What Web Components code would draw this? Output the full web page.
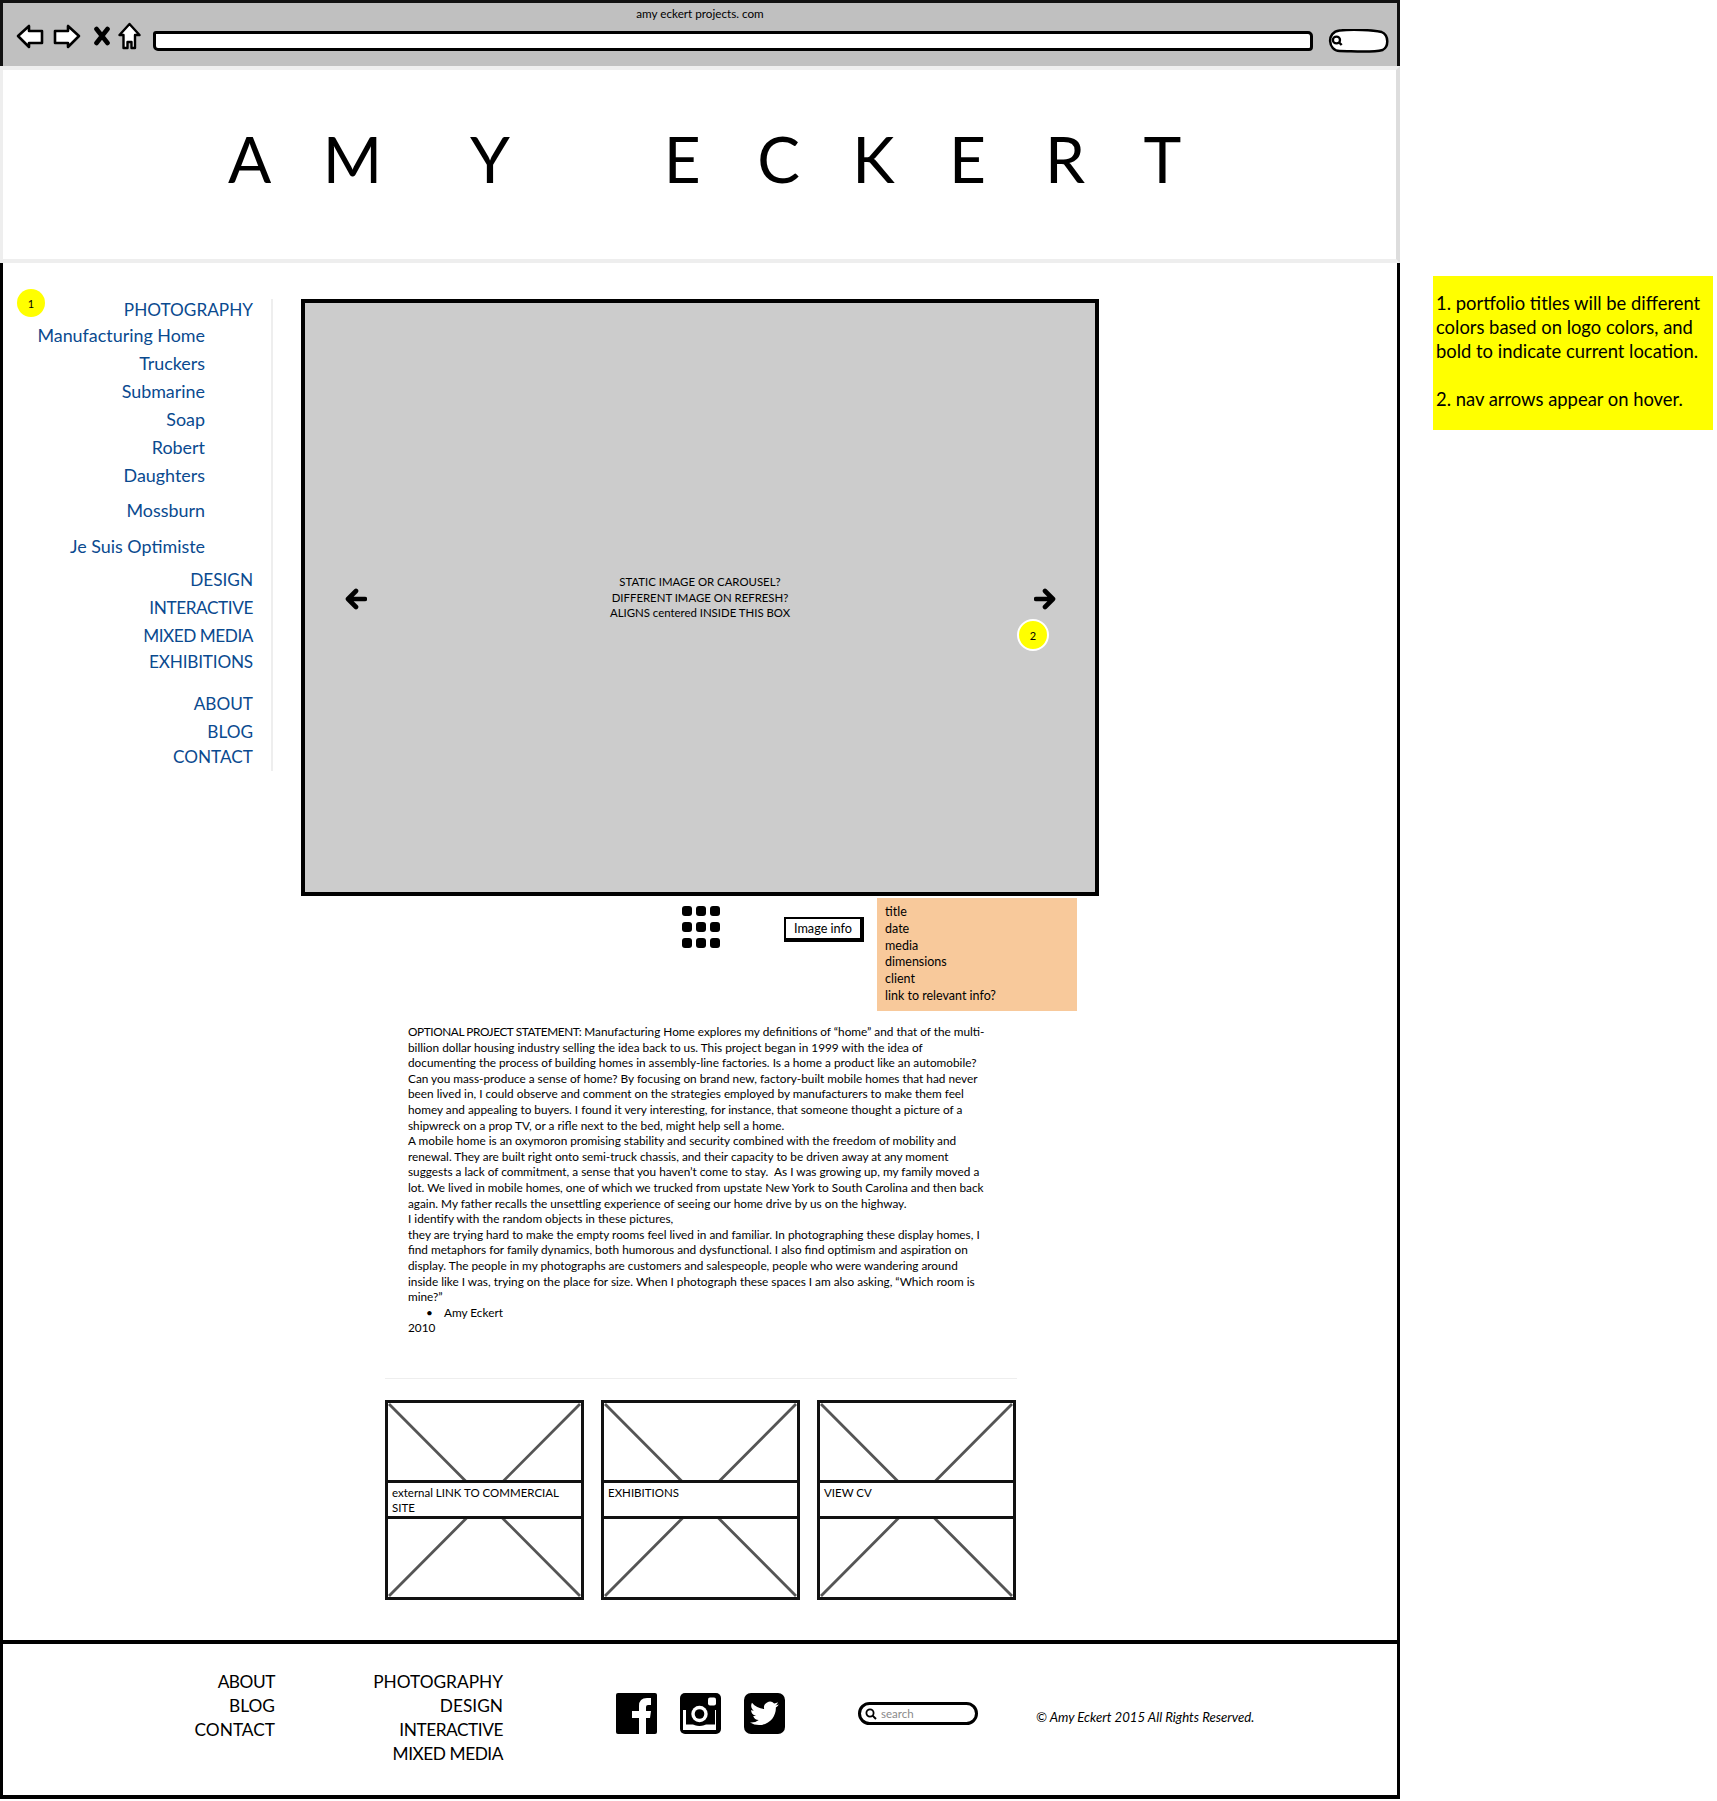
<!DOCTYPE html>
<html lang="en">
<head>
<meta charset="utf-8">
<title>Amy Eckert wireframe</title>
<style>
html,body{margin:0;padding:0;background:#fff}
body{font-family:Lato,"Liberation Sans",sans-serif;color:#000;width:1717px;height:1801px;overflow:hidden}
</style>
</head>
<body>
<x-page>
  <x-frame>
    <x-browser-bar slot="bar"></x-browser-bar>
    <x-banner slot="banner"><span style="margin-right:-11px">A</span> <span style="margin-right:28px">M</span> <span style="margin-right:52px">Y</span>&nbsp; <span style="margin-right:-6px">E</span> <span style="margin-right:-10px">C</span> <span style="margin-right:-8px">K</span> <span style="margin-right:-3.5px">E</span> <span style="margin-right:-2px">R</span> T</x-banner>
    <x-side-nav slot="nav"></x-side-nav>
    <x-stage slot="main"></x-stage>
    <x-info-row slot="main"></x-info-row>
    <x-statement slot="main"></x-statement>
    <x-tiles slot="main">
      <x-tile>external LINK TO COMMERCIAL SITE</x-tile>
      <x-tile>EXHIBITIONS</x-tile>
      <x-tile>VIEW CV</x-tile>
    </x-tiles>
    <x-site-footer slot="footer"></x-site-footer>
  </x-frame>
  <x-note>1. portfolio titles will be different<br>colors based on logo colors, and<br>bold to indicate current location.<br><br>2. nav arrows appear on hover.</x-note>
</x-page>
<script>
const def=(name,html)=>customElements.define(name,class extends HTMLElement{
  constructor(){super();this.attachShadow({mode:'open'}).innerHTML=typeof html==='function'?html():html;}
});

def('x-page',`<style>:host{display:flex;align-items:flex-start;width:1717px}</style><slot></slot>`);

def('x-frame',`<style>
:host{display:flex;flex-direction:column;width:1400px;height:1799px;box-sizing:border-box;flex:none}
.body{flex:1;display:flex;border-left:3px solid #000;border-right:3px solid #000;padding-top:32px;min-height:0}
.main{flex:1;display:flex;flex-direction:column;margin:4px 0 0 28px;min-width:0}
</style>
<slot name="bar"></slot><slot name="banner"></slot>
<div class="body"><slot name="nav"></slot><div class="main"><slot name="main"></slot></div></div>
<slot name="footer"></slot>`);

def('x-browser-bar',`<style>
:host{display:block;height:66px;box-sizing:border-box;background:#c0c0c0;border:3px solid #111;border-bottom:0;position:relative;font-size:11px}
.t{position:absolute;left:0;right:0;top:3px;text-align:center;line-height:14px;font-size:11.7px}
.row{display:flex;align-items:center;height:100%;padding:12px 0 0 13px;box-sizing:border-box}
svg{display:block;flex:none}
.nav{margin-bottom:10px}
.addr{flex:none;width:1160px;height:20px;box-sizing:border-box;background:#fff;border:3px solid #000;border-radius:3px 5px 4px 5px;margin-left:12px}
.srch{margin-left:14px}
</style>
<div class="t">amy eckert projects. com</div>
<div class="row">
<svg class="nav" width="28" height="26" viewBox="0 0 28 26"><path d="M2 13 L13 3 V8 H26 V20 H13 V24 Z" fill="#fff" stroke="#000" stroke-width="2.6" stroke-linejoin="round"/></svg>
<svg class="nav" width="28" height="26" viewBox="0 0 28 26" style="margin-left:9px"><path d="M26 13 L15 3 V8 H2 V20 H15 V24 Z" fill="#fff" stroke="#000" stroke-width="2.6" stroke-linejoin="round"/></svg>
<svg class="nav" width="18" height="20" viewBox="0 0 18 20" style="margin-left:12px"><path d="M3.5 3 L14.5 17 M14.5 3 L3.5 17" fill="none" stroke="#000" stroke-width="4.6" stroke-linecap="round"/></svg>
<svg class="nav" width="23" height="28" viewBox="0 0 23 28" style="margin-left:7px"><path d="M11.5 2 L21.5 13 H17 V26 H13.5 V20 H9.5 V26 H5.5 V13 H1.5 Z" fill="#fff" stroke="#000" stroke-width="2.4" stroke-linejoin="round"/></svg>
<div class="addr"></div>
<svg class="srch" width="63" height="24" viewBox="0 0 60 24" preserveAspectRatio="none"><path d="M12 1.5 C24 0 44 1 52 3 C59 6 59 18 53 21 C42 24 24 22 12 22 C1 22 -1 3 12 1.5 Z" fill="#fff" stroke="#000" stroke-width="2.4"/><circle cx="9" cy="11" r="3.4" fill="none" stroke="#000" stroke-width="2.2"/><path d="M11.5 13.5 L14 16" stroke="#000" stroke-width="2.4"/></svg>
</div>`);

def('x-banner',`<style>
:host{display:block;height:197px;box-sizing:border-box;background:#fff;border:4px solid #eee;border-left-width:3px;border-right-color:#ddd;position:relative}
.name{padding:50px 0 0 225px;font-size:64px;line-height:78px;letter-spacing:23px;word-spacing:0;white-space:nowrap;font-weight:400;margin:0}
</style><h1 class="name"><slot></slot></h1>`);

def('x-side-nav',()=>{
 const items=[['PHOTOGRAPHY',0,-3],['Manufacturing Home',1,-3],['Truckers',1,0],['Submarine',1,0],['Soap',1,0],['Robert',1,0],['Daughters',1,0],['Mossburn',1,7],['Je Suis Optimiste',1,8],['DESIGN',0,6],['INTERACTIVE',0,0,-.4],['MIXED MEDIA',0,0,-.45],['EXHIBITIONS',0,-2,-.2],['ABOUT',0,14],['BLOG',0,0],['CONTACT',0,-3]];
 return `<style>
:host{display:block;width:270px;height:476px;box-sizing:border-box;position:relative;flex:none}
ul{list-style:none;margin:4px 0 0;padding:0 18px 0 0;height:472px;box-sizing:border-box;display:flex;flex-direction:column;align-items:flex-end;border-right:2px solid #eee;color:#0a4a8f;font-size:17.2px;line-height:28px}
li.s{margin-right:48px;font-size:17.9px}
x-badge{position:absolute;left:14px;top:-6px}
</style><x-badge size="28">1</x-badge><ul>${items.map(([t,s,d,l])=>`<li class="${s?'s':''}" style="margin-top:${d}px${l?`;letter-spacing:${l}px`:''}">${t}</li>`).join('')}</ul>`;
});

customElements.define('x-badge',class extends HTMLElement{
 constructor(){super();const s=this.getAttribute('size')||28;const b=this.hasAttribute('ring')?'2px solid #fff':'0';
 this.attachShadow({mode:'open'}).innerHTML=`<style>:host{display:flex;width:${s}px;height:${s}px;box-sizing:border-box;border-radius:50%;background:#ff0;border:${b};align-items:center;justify-content:center;font-size:11px;line-height:1;color:#000}</style><slot></slot>`;}
});

def('x-stage',`<style>
:host{display:flex;width:798px;height:597px;box-sizing:border-box;flex:none;border:4px solid #000;background:#ccc;align-items:center;justify-content:center;position:relative;text-align:center;font-size:11.4px;line-height:15.5px}
svg{position:absolute;top:285px}
x-badge{position:absolute;left:712px;top:316px}
p{margin:0}
</style>
<svg style="left:40px" width="22" height="22" viewBox="0 0 22 22"><path d="M20 11 H4 M11 3 L3 11 L11 19" fill="none" stroke="#000" stroke-width="4.6" stroke-linecap="round" stroke-linejoin="round"/></svg>
<svg style="left:729px" width="22" height="22" viewBox="0 0 22 22"><path d="M2 11 H18 M11 3 L19 11 L11 19" fill="none" stroke="#000" stroke-width="4.6" stroke-linecap="round" stroke-linejoin="round"/></svg>
<p>STATIC IMAGE OR CAROUSEL?<br>DIFFERENT IMAGE ON REFRESH?<br>ALIGNS centered INSIDE THIS BOX</p>
<x-badge size="32" ring>2</x-badge>`);

def('x-info-row',`<style>
:host{display:flex;align-items:flex-start;padding-left:381px;flex:none}
.dots{display:grid;grid-template-columns:repeat(3,10px);grid-auto-rows:10px;gap:6px 4px;margin-top:10px}
.dots i{background:#000;border-radius:3px}
.btn{width:80px;height:25px;box-sizing:border-box;margin:21px 13px 0 64px;border:2px solid #000;border-right-width:4px;border-bottom-width:4px;font-size:12.7px;line-height:19px;text-align:center;white-space:nowrap}
.card{width:200px;height:113px;box-sizing:border-box;margin-top:2px;padding:6px 8px;background:#f8c99b;font-size:12.5px;line-height:16.8px}
</style>
<div class="dots">${'<i></i>'.repeat(9)}</div>
<div class="btn">Image info</div>
<div class="card">title<br>date<br>media<br>dimensions<br>client<br>link to relevant info?</div>`);

def('x-statement',`<style>
:host{display:block;flex:none;margin:13px 0 0 107px;font-size:11.8px;line-height:15.6px;white-space:nowrap}
.b{padding-left:18px}.b::before{content:"•";display:inline-block;width:18px}
.c{letter-spacing:-.4px}
</style>
<span class="c">OPTIONAL PROJECT STATEMENT:</span> Manufacturing Home explores my definitions of “home” and that of the multi-<br>
billion dollar housing industry selling the idea back to us. This project began in 1999 with the idea of<br>
documenting the process of building homes in assembly-line factories. Is a home a product like an automobile?<br>
Can you mass-produce a sense of home? By focusing on brand new, factory-built mobile homes that had never<br>
been lived in, I could observe and comment on the strategies employed by manufacturers to make them feel<br>
homey and appealing to buyers. I found it very interesting, for instance, that someone thought a picture of a<br>
shipwreck on a prop TV, or a rifle next to the bed, might help sell a home.<br>
A mobile home is an oxymoron promising stability and security combined with the freedom of mobility and<br>
renewal. They are built right onto semi-truck chassis, and their capacity to be driven away at any moment<br>
suggests a lack of commitment, a sense that you haven’t come to stay.&nbsp; As I was growing up, my family moved a<br>
lot. We lived in mobile homes, one of which we trucked from upstate New York to South Carolina and then back<br>
again. My father recalls the unsettling experience of seeing our home drive by us on the highway.<br>
I identify with the random objects in these pictures,<br>
they are trying hard to make the empty rooms feel lived in and familiar. In photographing these display homes, I<br>
find metaphors for family dynamics, both humorous and dysfunctional. I also find optimism and aspiration on<br>
display. The people in my photographs are customers and salespeople, people who were wandering around<br>
inside like I was, trying on the place for size. When I photograph these spaces I am also asking, “Which room is<br>
mine?”
<div class="b">Amy Eckert</div>
2010`);

def('x-tiles',`<style>
:host{display:flex;flex:none;width:632px;margin:42px 0 0 84px;padding-top:21px;gap:17px;border-top:1px solid #eee;box-sizing:border-box}
</style><slot></slot>`);

def('x-tile',`<style>
:host{display:block;width:199px;height:200px;box-sizing:border-box;border:3px solid #111;position:relative;background:#fff;flex:none}
svg{display:block;width:100%;height:100%}
.l{position:absolute;left:-3px;right:-3px;top:77px;height:39px;box-sizing:border-box;background:#fff;border:3px solid #111;padding:2px 4px;font-size:11.5px;line-height:15.5px}
</style>
<svg viewBox="0 0 193 194" preserveAspectRatio="none"><path d="M1 1 L192 193 M192 1 L1 193" stroke="#555" stroke-width="2.8" fill="none"/></svg>
<div class="l"><slot></slot></div>`);

def('x-site-footer',`<style>
:host{display:flex;align-items:flex-start;height:159px;box-sizing:border-box;border:4px solid #000;border-left-width:3px;border-right-width:3px;padding-top:26px;flex:none;font-size:17.3px;line-height:24px}
.c{text-align:right;white-space:nowrap;flex:none}
.c span{letter-spacing:-.45px}
.icons{display:flex;gap:23px;margin:23px 0 0 113px}
svg{display:block;flex:none}
.s{width:120px;height:23px;box-sizing:border-box;margin:32px 0 0 73px;border:3px solid #000;border-radius:12px;display:flex;align-items:center;gap:4px;padding-left:4px;font-size:11.5px;line-height:14px;color:#8a8a8a}
.cp{margin:37px 0 0 58px;font-size:13.2px;line-height:20px;font-style:italic;white-space:nowrap}
</style>
<div class="c" style="width:272px"><span>ABOUT</span><br>BLOG<br>CONTACT</div>
<div class="c" style="width:228px">PHOTOGRAPHY<br>DESIGN<br><span>INTERACTIVE</span><br><span>MIXED MEDIA</span></div>
<div class="icons">
<svg width="41" height="41" viewBox="0 0 41 41"><rect width="41" height="41" rx="2"/><path d="M23 41 V25 H16 V18 H23 V13 Q23 5 31 5 H35 V12 H32 Q30 12 30 14 V18 H35 L34 25 H30 V41 Z" fill="#fff"/></svg>
<svg width="41" height="41" viewBox="0 0 41 41"><rect width="41" height="41" rx="5"/><rect x="3" y="17" width="33" height="20" fill="#fff"/><rect x="6" y="17" width="29" height="14.5" fill="#000"/><circle cx="19.5" cy="21" r="12" fill="#000"/><circle cx="19.5" cy="21" r="8.2" fill="#fff"/><circle cx="19.5" cy="21" r="4.8" fill="#000"/><rect x="28" y="4.5" width="8" height="8" rx="2" fill="#fff"/></svg>
<svg width="41" height="41" viewBox="0 0 41 41"><rect width="41" height="41" rx="7"/><g transform="translate(6 6) scale(1.2)"><path fill="#fff" d="M23.953 4.57a10 10 0 01-2.825.775 4.958 4.958 0 002.163-2.723c-.951.555-2.005.959-3.127 1.184a4.92 4.92 0 00-8.384 4.482C7.69 8.095 4.067 6.13 1.64 3.162a4.822 4.822 0 00-.666 2.475c0 1.71.87 3.213 2.188 4.096a4.904 4.904 0 01-2.228-.616v.06a4.923 4.923 0 003.946 4.827 4.996 4.996 0 01-2.212.085 4.936 4.936 0 004.604 3.417 9.867 9.867 0 01-6.102 2.105c-.39 0-.779-.023-1.17-.067a13.995 13.995 0 007.557 2.209c9.053 0 13.998-7.496 13.998-13.985 0-.21 0-.42-.015-.63A9.935 9.935 0 0024 4.59z"/></g></svg>
</div>
<div class="s"><svg width="12" height="12" viewBox="0 0 12 12"><circle cx="5" cy="5" r="3.6" fill="none" stroke="#000" stroke-width="1.8"/><path d="M7.6 7.6 L11 11" stroke="#000" stroke-width="2"/></svg>search</div>
<div class="cp">© Amy Eckert 2015 All Rights Reserved.</div>`);

def('x-note',`<style>
:host{display:block;flex:none;width:280px;height:154px;box-sizing:border-box;margin:276px 0 0 33px;padding:15px 3px;background:#ff0;font-size:18.4px;line-height:24px;white-space:nowrap}
</style><slot></slot>`);
</script>
</body>
</html>
